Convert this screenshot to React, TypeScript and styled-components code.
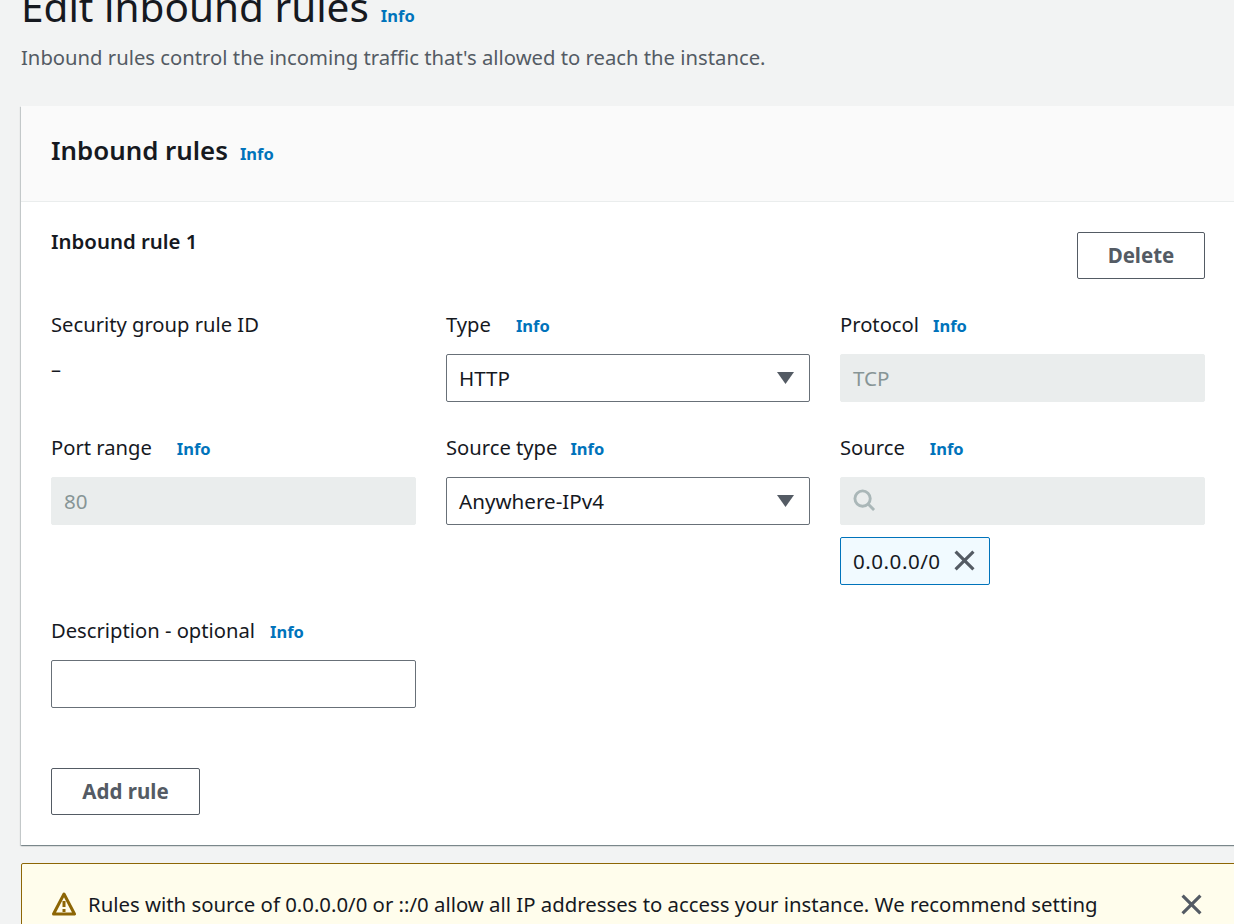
import React from 'react';
import styled, { createGlobalStyle } from 'styled-components';

const GlobalStyle = createGlobalStyle`
  html, body {
    margin: 0;
    padding: 0;
    height: 100%;
    overflow: hidden;
    background: #f2f3f3;
  }
  body {
    font-family: "Noto Sans", "Open Sans", sans-serif;
    color: #16191f;
  }
`;

const Page = styled.div`
  width: 1234px;
  height: 924px;
  overflow: hidden;
  padding-left: 20px;
  box-sizing: border-box;
`;

const PageHeader = styled.header`
  display: flow-root;
  height: 106px;
  padding-left: 1px;
`;

const Title = styled.h1`
  display: flex;
  align-items: baseline;
  gap: 12px;
  margin: -18px 0 0;
  font-size: 40.5px;
  line-height: 50px;
  font-weight: 400;
  color: #16191f;
`;

const InfoLink = styled.a<{ $left?: number }>`
  font-size: 16.5px;
  font-weight: 700;
  color: #0073bb;
  margin-left: ${p => p.$left ?? 0}px;
`;

const Subtitle = styled.p`
  margin: 2px 0 0;
  font-size: 20.25px;
  line-height: 28px;
  color: #545b64;
`;

const Card = styled.section`
  width: 1216px;
  margin-left: 1px;
  background: #fff;
  box-shadow: 0 1px 1px 0 rgba(0, 28, 36, 0.3), 1px 1px 1px 0 rgba(0, 28, 36, 0.15),
    -1px 1px 1px 0 rgba(0, 28, 36, 0.15);
`;

const CardHeader = styled.div`
  height: 96px;
  box-sizing: border-box;
  padding: 0 0 4px 30px;
  display: flex;
  align-items: center;
  background: #fafafa;
  border-bottom: 1px solid #eaeded;
`;

const CardTitle = styled.h2`
  margin: 0;
  font-size: 25.85px;
  line-height: 34px;
  font-weight: 600;
  display: flex;
  align-items: baseline;
  gap: 12px;
`;

const CardBody = styled.div`
  padding: 30px 32px 30px 30px;
`;

const RuleHead = styled.div`
  display: flex;
  justify-content: space-between;
  align-items: flex-start;
  height: 77px;
`;

const RuleTitle = styled.h3`
  margin: -1px 0 0;
  font-size: 20.4px;
  line-height: 20px;
  font-weight: 600;
`;

const Grid = styled.div`
  display: grid;
  grid-template-columns: 365px 364px 365px;
  column-gap: 30px;
  row-gap: 30px;
`;

const Field = styled.div`
  display: flex;
  flex-direction: column;
  min-height: 93px;
`;

const Label = styled.label`
  display: flex;
  align-items: baseline;
  height: 45px;
  font-size: 20.2px;
  line-height: 30px;
  color: #16191f;
`;

const Dash = styled.div`
  padding-top: 1px;
  font-size: 20px;
  line-height: 30px;
`;

const Control = styled.div<{ $disabled?: boolean }>`
  height: 48px;
  box-sizing: border-box;
  padding: 0 12px 1px;
  display: flex;
  align-items: center;
  justify-content: space-between;
  font-size: 20.6px;
  border-radius: 2px;
  background: ${p => (p.$disabled ? '#eaeded' : '#fff')};
  color: ${p => (p.$disabled ? '#879596' : '#16191f')};
  border: 1px solid ${p => (p.$disabled ? '#eaeded' : '#687078')};
`;

const Caret = styled.svg`
  width: 17px;
  height: 12px;
  margin: 1px 3px 0 0;
  fill: #545b64;
`;

const Tag = styled.div`
  align-self: flex-start;
  display: flex;
  align-items: center;
  gap: 13px;
  height: 48px;
  width: 150px;
  box-sizing: border-box;
  margin-top: 12px;
  padding: 0 12px 1px;
  font-size: 20.6px;
  letter-spacing: 0.5px;
  background: #f1faff;
  border: 1px solid #0073bb;
  border-radius: 2px;
`;

const Actions = styled.div`
  margin-top: 60px;
`;

const Button = styled.button<{ $width: number }>`
  width: ${p => p.$width}px;
  height: 47px;
  padding: 0 0 2px;
  background: #fff;
  border: 1px solid #545b64;
  border-radius: 2px;
  font-family: inherit;
  font-size: 20.5px;
  font-weight: 700;
  color: #545b64;
`;

const Alert = styled.div`
  width: 1216px;
  height: 120px;
  margin: 18px 0 0 1px;
  box-sizing: border-box;
  padding: 26px 34px 0 30px;
  display: flex;
  align-items: flex-start;
  background: #fffdec;
  border: 1px solid #8d6605;
  border-radius: 2px;
  font-size: 20.35px;
  line-height: 28px;
`;

const AlertText = styled.div`
  margin-left: 12px;
  flex: 1;
  white-space: nowrap;
`;

const IconSlot = styled.svg<{ $top?: number }>`
  flex: none;
  margin-top: ${p => p.$top ?? 0}px;
`;

const CloseIcon = ({ size = 20, top }: { size?: number; top?: number }) => (
  <IconSlot $top={top} width={size} height={size} viewBox="0 0 20 20">
    <path d="M1.5 1.5 L18.5 18.5 M18.5 1.5 L1.5 18.5" stroke="#545b64" strokeWidth="3" fill="none" />
  </IconSlot>
);

const SearchIcon = () => (
  <IconSlot width="23" height="23" viewBox="0 0 24 24">
    <circle cx="10" cy="10" r="8" stroke="#aab7b8" strokeWidth="3" fill="none" />
    <path d="M15.5 15.5 L22 22" stroke="#aab7b8" strokeWidth="3" fill="none" />
  </IconSlot>
);

const WarningIcon = () => (
  <IconSlot $top={2} width="24" height="24" viewBox="0 0 24 24">
    <path d="M12 2 L22.5 22 L1.5 22 Z" stroke="#8d6605" strokeWidth="3" strokeLinejoin="round" fill="none" />
    <path d="M12 9 V15 M12 17 V20" stroke="#8d6605" strokeWidth="3" fill="none" />
  </IconSlot>
);

const Select = ({ value }: { value: string }) => (
  <Control>
    {value}
    <Caret viewBox="0 0 17 12">
      <path d="M0 0 H17 L8.5 12 Z" />
    </Caret>
  </Control>
);

export default function App() {
  return (
    <Page>
      <GlobalStyle />
      <PageHeader>
        <Title>
          Edit inbound rules <InfoLink>Info</InfoLink>
        </Title>
        <Subtitle>Inbound rules control the incoming traffic that's allowed to reach the instance.</Subtitle>
      </PageHeader>
      <Card>
        <CardHeader>
          <CardTitle>
            Inbound rules <InfoLink>Info</InfoLink>
          </CardTitle>
        </CardHeader>
        <CardBody>
          <RuleHead>
            <RuleTitle>Inbound rule 1</RuleTitle>
            <Button $width={128}>Delete</Button>
          </RuleHead>
          <Grid>
            <Field>
              <Label>Security group rule ID</Label>
              <Dash>–</Dash>
            </Field>
            <Field>
              <Label>Type <InfoLink $left={25}>Info</InfoLink></Label>
              <Select value="HTTP" />
            </Field>
            <Field>
              <Label>Protocol <InfoLink $left={14}>Info</InfoLink></Label>
              <Control $disabled>TCP</Control>
            </Field>
            <Field>
              <Label>Port range <InfoLink $left={25}>Info</InfoLink></Label>
              <Control $disabled>80</Control>
            </Field>
            <Field>
              <Label>Source type <InfoLink $left={13}>Info</InfoLink></Label>
              <Select value="Anywhere-IPv4" />
            </Field>
            <Field>
              <Label>Source <InfoLink $left={25}>Info</InfoLink></Label>
              <Control $disabled><SearchIcon /></Control>
              <Tag>0.0.0.0/0 <CloseIcon size={21} /></Tag>
            </Field>
            <Field>
              <Label>Description - optional <InfoLink $left={15}>Info</InfoLink></Label>
              <Control />
            </Field>
          </Grid>
          <Actions>
            <Button $width={149}>Add rule</Button>
          </Actions>
        </CardBody>
      </Card>
      <Alert>
        <WarningIcon />
        <AlertText>Rules with source of 0.0.0.0/0 or ::/0 allow all IP addresses to access your instance. We recommend setting</AlertText>
        <CloseIcon size={21} top={4} />
      </Alert>
    </Page>
  );
}
